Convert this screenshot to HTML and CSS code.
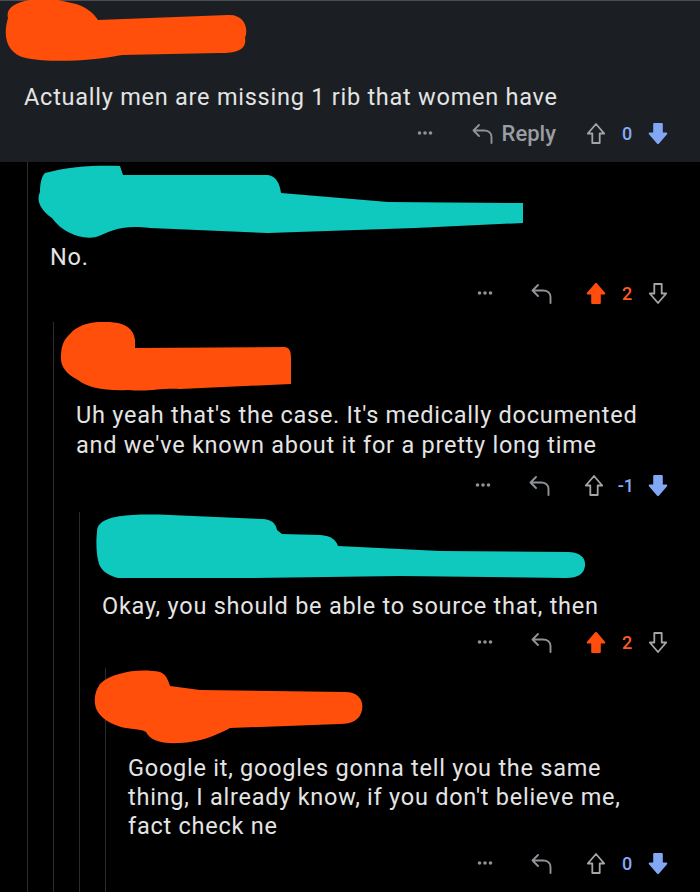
FILE: index.html
```html
<!DOCTYPE html>
<html lang="en">
<head>
<meta charset="utf-8">
<title>Comments</title>
<link rel="stylesheet" href="styles.css">
</head>
<body>
<div class="page">
  <section class="top">
    <svg class="blob blob-1" width="250" height="62" viewBox="0 0 250 62">
      <path d="M8 18 C4 4 28 -4 58 0 L76 4 C88 8 94 14 98 20 L228 15 C244 14 249 28 245 38 C247 50 236 53 220 53 L122 55 C92 61 50 63 26 58 C8 54 2 38 8 18 Z" fill="#ff4f0a"/>
    </svg>
    <p class="text text-top">Actually men are missing 1 rib that women have</p>
    <div class="actions">
      <svg class="ic-dots" width="16" height="6" viewBox="0 0 16 6"><circle cx="2.5" cy="3" r="1.8"/><circle cx="8" cy="3" r="1.8"/><circle cx="13.5" cy="3" r="1.8"/></svg>
      <span class="reply">
        <svg class="ic-reply" width="23" height="23" viewBox="0 0 23 23"><path d="M8 3 L2.5 8.5 L8 14 M2.5 8.5 H13 C17.5 8.5 20.5 11 20.5 15 V21"/></svg>
        <span class="reply-label">Reply</span>
      </span>
      <svg class="ic-vote" width="20" height="23" viewBox="0 0 20 23"><path class="outline" d="M10 2 L1.8 11.5 H6.3 V21 H13.7 V11.5 H18.2 Z"/></svg>
      <span class="count blue">0</span>
      <svg class="ic-vote down" width="20" height="23" viewBox="0 0 20 23"><path class="fill-blue" d="M10 2 L1.8 11.5 H6.3 V21 H13.7 V11.5 H18.2 Z"/></svg>
    </div>
  </section>

  <div class="thread t1">
    <article class="comment c2">
      <svg class="blob blob-2" width="500" height="75" viewBox="30 165 500 75">
        <path d="M45 173 C70 166 100 165 120 166 L123 175 L268 175 C276 176 280 184 281 193 L388 202 L523 203 L523 223 L415 228 L268 233 L150 228 C120 224 110 232 96 237 C80 240 62 232 52 218 C40 210 36 200 40 192 C40 182 42 176 45 173 Z" fill="#0fc9bf"/>
      </svg>
      <p class="text">No.</p>
      <div class="actions">
        <svg class="ic-dots" width="16" height="6" viewBox="0 0 16 6"><circle cx="2.5" cy="3" r="1.8"/><circle cx="8" cy="3" r="1.8"/><circle cx="13.5" cy="3" r="1.8"/></svg>
        <svg class="ic-reply solo" width="23" height="23" viewBox="0 0 23 23"><path d="M8 3 L2.5 8.5 L8 14 M2.5 8.5 H13 C17.5 8.5 20.5 11 20.5 15 V21"/></svg>
        <svg class="ic-vote" width="20" height="23" viewBox="0 0 20 23"><path class="fill-orange" d="M10 2 L1.8 11.5 H6.3 V21 H13.7 V11.5 H18.2 Z"/></svg>
        <span class="count orange">2</span>
        <svg class="ic-vote down" width="20" height="23" viewBox="0 0 20 23"><path class="outline" d="M10 2 L1.8 11.5 H6.3 V21 H13.7 V11.5 H18.2 Z"/></svg>
      </div>
    </article>

    <div class="thread t2">
      <article class="comment c3">
        <svg class="blob blob-3" width="240" height="70" viewBox="56 322 240 70">
          <path d="M70 334 C80 322 100 320 118 323 C130 326 134 332 135 340 L135 348 L285 347 C290 348 291 352 291 358 L291 384 L180 389 C160 388 150 392 128 390 C105 391 88 388 78 380 C66 374 60 366 61 356 C61 346 64 339 70 334 Z" fill="#ff4f0a"/>
        </svg>
        <p class="text">Uh yeah that's the case. It's medically documented<br>and we've known about it for a pretty long time</p>
        <div class="actions">
          <svg class="ic-dots" width="16" height="6" viewBox="0 0 16 6"><circle cx="2.5" cy="3" r="1.8"/><circle cx="8" cy="3" r="1.8"/><circle cx="13.5" cy="3" r="1.8"/></svg>
          <svg class="ic-reply solo" width="23" height="23" viewBox="0 0 23 23"><path d="M8 3 L2.5 8.5 L8 14 M2.5 8.5 H13 C17.5 8.5 20.5 11 20.5 15 V21"/></svg>
          <svg class="ic-vote" width="20" height="23" viewBox="0 0 20 23"><path class="outline" d="M10 2 L1.8 11.5 H6.3 V21 H13.7 V11.5 H18.2 Z"/></svg>
          <span class="count blue">-1</span>
          <svg class="ic-vote down" width="20" height="23" viewBox="0 0 20 23"><path class="fill-blue" d="M10 2 L1.8 11.5 H6.3 V21 H13.7 V11.5 H18.2 Z"/></svg>
        </div>
      </article>

      <div class="thread t3">
        <article class="comment c4">
          <svg class="blob blob-4" width="500" height="70" viewBox="92 512 500 70">
            <path d="M100 524 C110 514 140 514 170 515 L262 519 C272 519 276 524 277 530 L282 534 L320 535 C332 536 336 540 338 546 L440 551 L568 552 C580 552 586 558 585 566 C584 574 578 578 566 578 L400 576 L250 578 L118 578 C110 576 102 572 99 564 C96 554 96 540 97 532 C97 528 98 526 100 524 Z" fill="#0fc9bf"/>
          </svg>
          <p class="text">Okay, you should be able to source that, then</p>
          <div class="actions">
            <svg class="ic-dots" width="16" height="6" viewBox="0 0 16 6"><circle cx="2.5" cy="3" r="1.8"/><circle cx="8" cy="3" r="1.8"/><circle cx="13.5" cy="3" r="1.8"/></svg>
            <svg class="ic-reply solo" width="23" height="23" viewBox="0 0 23 23"><path d="M8 3 L2.5 8.5 L8 14 M2.5 8.5 H13 C17.5 8.5 20.5 11 20.5 15 V21"/></svg>
            <svg class="ic-vote" width="20" height="23" viewBox="0 0 20 23"><path class="fill-orange" d="M10 2 L1.8 11.5 H6.3 V21 H13.7 V11.5 H18.2 Z"/></svg>
            <span class="count orange">2</span>
            <svg class="ic-vote down" width="20" height="23" viewBox="0 0 20 23"><path class="outline" d="M10 2 L1.8 11.5 H6.3 V21 H13.7 V11.5 H18.2 Z"/></svg>
          </div>
        </article>

        <div class="thread t4">
          <article class="comment c5">
            <svg class="blob blob-5" width="280" height="78" viewBox="90 668 280 78">
              <path d="M100 684 C112 672 140 668 160 672 C166 674 168 680 170 686 L200 690 L345 692 C358 692 364 700 362 710 C360 720 352 724 340 724 L230 728 C215 736 200 742 180 743 C160 744 150 740 146 732 C140 728 128 730 118 726 C106 722 96 714 95 704 C94 696 96 690 100 684 Z" fill="#ff4f0a"/>
            </svg>
            <p class="text text-tight">Google it, googles gonna tell you the same<br>thing, I already know, if you don't believe me,<br>fact check ne</p>
            <div class="actions">
              <svg class="ic-dots" width="16" height="6" viewBox="0 0 16 6"><circle cx="2.5" cy="3" r="1.8"/><circle cx="8" cy="3" r="1.8"/><circle cx="13.5" cy="3" r="1.8"/></svg>
              <svg class="ic-reply solo" width="23" height="23" viewBox="0 0 23 23"><path d="M8 3 L2.5 8.5 L8 14 M2.5 8.5 H13 C17.5 8.5 20.5 11 20.5 15 V21"/></svg>
              <svg class="ic-vote" width="20" height="23" viewBox="0 0 20 23"><path class="outline" d="M10 2 L1.8 11.5 H6.3 V21 H13.7 V11.5 H18.2 Z"/></svg>
              <span class="count blue">0</span>
              <svg class="ic-vote down" width="20" height="23" viewBox="0 0 20 23"><path class="fill-blue" d="M10 2 L1.8 11.5 H6.3 V21 H13.7 V11.5 H18.2 Z"/></svg>
            </div>
          </article>
        </div>
      </div>
    </div>
  </div>
</div>
</body>
</html>
```

FILE: styles.css
```css
* { box-sizing: border-box; }

html, body {
  margin: 0;
  padding: 0;
  background: #000;
}

body {
  font-family: Roboto, "Liberation Sans", sans-serif;
  color: #e4e4e4;
  width: 700px;
  height: 892px;
  overflow: hidden;
}

.page {
  display: flex;
  flex-direction: column;
  min-height: 892px;
}

.top {
  background: #1b1f23;
  border-top: 1px solid #4a4d50;
  padding: 0 32px 14px 24px;
}

.blob { display: block; }

.blob-1 { margin-left: -24px; margin-top: -1px; }

.text {
  margin: 0;
  font-size: 23.5px;
  line-height: 30px;
  letter-spacing: 0.75px;
  white-space: nowrap;
}

.text-top { margin-top: 20px; }

.text-tight { line-height: 29px; }

.actions {
  display: flex;
  align-items: center;
  justify-content: flex-end;
  height: 30px;
  margin-top: 6px;
  color: #8f9397;
}

.ic-dots { fill: #8f9397; margin-right: 37px; }

.top .ic-dots { margin-right: 38px; }

.reply {
  display: flex;
  align-items: center;
  gap: 8px;
  margin-right: 30px;
}

.reply-label {
  font-size: 22px;
  font-weight: 500;
  color: #9a9da1;
}

.ic-reply path {
  fill: none;
  stroke: #8f9397;
  stroke-width: 1.9;
  stroke-linecap: round;
  stroke-linejoin: round;
}

.ic-reply.solo { margin-right: 33px; }

.ic-vote path { stroke-linejoin: round; stroke-linecap: round; }

.ic-vote .outline { fill: none; stroke: #a3a6a9; stroke-width: 1.8; }
.ic-vote .fill-orange { fill: #ff4d0d; stroke: #ff4d0d; stroke-width: 2.2; }
.ic-vote .fill-blue { fill: #82a8f5; stroke: #82a8f5; stroke-width: 2.2; }

.ic-vote.down { transform: rotate(180deg); }

.count {
  min-width: 14px;
  margin: 0 14px;
  text-align: center;
  font-size: 18px;
  font-weight: 500;
}

.count.blue { color: #86aaf5; }
.count.orange { color: #ff5a1f; }

.thread {
  border-left: 1px solid #2c2c2c;
  padding-left: 22px;
  flex: 1;
  display: flex;
  flex-direction: column;
}

.t1 { margin-left: 27px; }
.t2 { margin-left: 3px; margin-top: 14px; }
.t3 { margin-left: 3px; margin-top: 12px; }
.t4 { margin-left: 3px; margin-top: 11px; }

.comment { padding-right: 32px; }

.blob-2 { margin-left: -20px; margin-top: 3px; }
.c2 .text { margin-top: 2px; }

.blob-3 { margin-left: -20px; }
.c3 .text { margin-top: 8px; }
.c3 .actions { margin-top: 10px; }

.blob-4 { margin-left: -10px; }
.c4 .text { margin-top: 9px; }

.blob-5 { margin-left: -38px; }
.c5 .text { margin-top: 8px; }
.c5 .actions { margin-top: 7px; }
```
